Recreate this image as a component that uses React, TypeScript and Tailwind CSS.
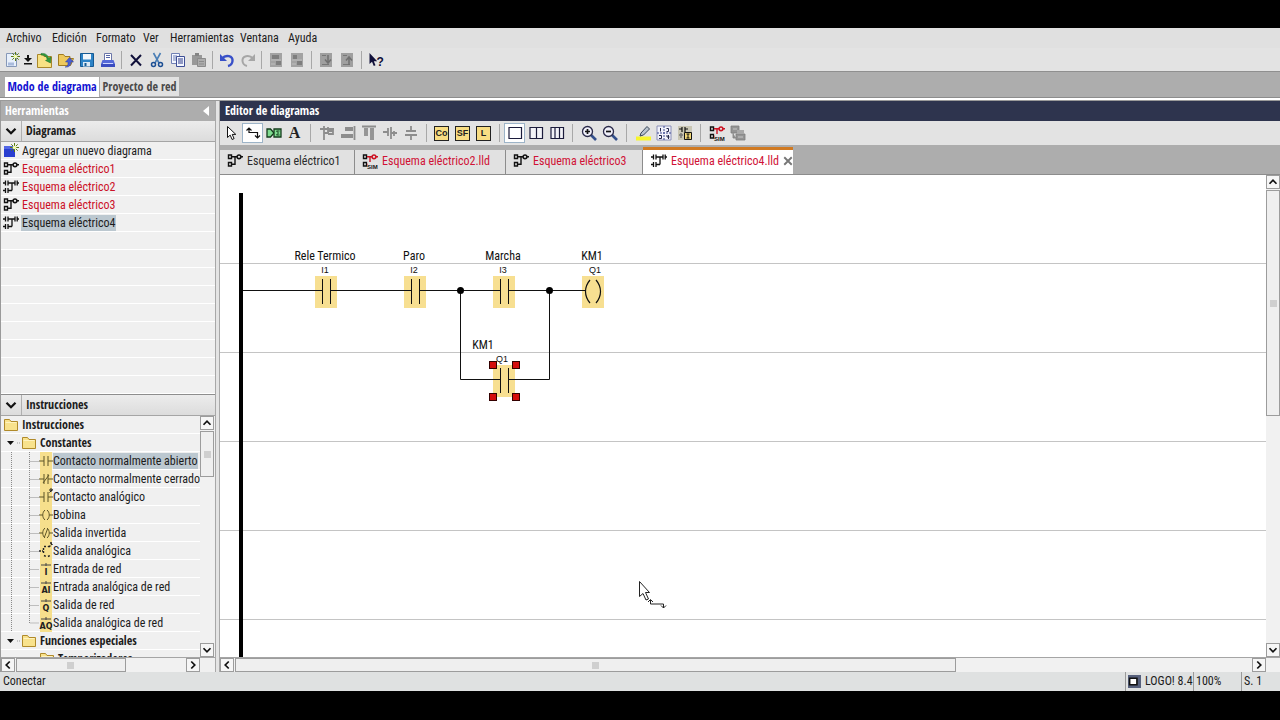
import type { ReactNode } from "react";

const MENUS = [
  { label: "Archivo", width: "w-[46px]" },
  { label: "Edición", width: "w-[44px]" },
  { label: "Formato", width: "w-[47px]" },
  { label: "Ver", width: "w-[27px]" },
  { label: "Herramientas", width: "w-[70px]" },
  { label: "Ventana", width: "w-[48px]" },
  { label: "Ayuda", width: "w-[40px]" },
];

type SchemeKind = "fbd" | "ladder" | "sim";

const DIAGRAMS: { name: string; kind: SchemeKind; selected?: boolean }[] = [
  { name: "Esquema eléctrico1", kind: "fbd" },
  { name: "Esquema eléctrico2", kind: "ladder" },
  { name: "Esquema eléctrico3", kind: "fbd" },
  { name: "Esquema eléctrico4", kind: "ladder", selected: true },
];

const INSTRUCTIONS = [
  "Contacto normalmente abierto",
  "Contacto normalmente cerrado",
  "Contacto analógico",
  "Bobina",
  "Salida invertida",
  "Salida analógica",
  "Entrada de red",
  "Entrada analógica de red",
  "Salida de red",
  "Salida analógica de red",
];

const TABS: { name: string; kind: SchemeKind; width: string; dark?: boolean }[] = [
  { name: "Esquema eléctrico1", kind: "fbd", width: "w-[135px]", dark: true },
  { name: "Esquema eléctrico2.lld", kind: "sim", width: "w-[151px]" },
  { name: "Esquema eléctrico3", kind: "fbd", width: "w-[137px]" },
];

// The bold titles use a family of their own
const BOLD = "font-['Open_Sans_Condensed','Roboto_Condensed',Roboto,sans-serif] font-bold";

function Icon({ children, className = "h-4 w-4" }: { children: ReactNode; className?: string }) {
  return (
    <svg viewBox="0 0 16 16" className={`shrink-0 ${className}`} fill="none" aria-hidden="true">
      {children}
    </svg>
  );
}

function ToolButton({
  label,
  children,
  active = false,
  width = "w-[21px]",
}: {
  label: string;
  children: ReactNode;
  active?: boolean;
  width?: string;
}) {
  return (
    <button
      type="button"
      aria-label={label}
      className={`flex h-5 shrink-0 items-center justify-center ${width} ${
        active ? "border border-[#9db4c8] bg-white" : ""
      }`}
    >
      {children}
    </button>
  );
}

function Separator({ width = "w-[7px]" }: { width?: string }) {
  return (
    <span className={`flex shrink-0 justify-center ${width}`}>
      <span className="h-[18px] w-px bg-[#a8a8a8]" />
    </span>
  );
}

/* ---------- icons ---------- */

function Burst() {
  return (
    <g>
      <path d="M11.500 0v9M7 4.500h9M8.300 1.300l6.400 6.400M14.700 1.300L8.300 7.700" stroke="#5a7a10" />
      <circle cx="11.500" cy="4.500" r="1.800" fill="#f6ffb0" />
    </g>
  );
}

function FolderShape() {
  return (
    <g stroke="#b08a2a">
      <path d="M1.500 2.500h5l1.500 2h6.500v9h-13z" fill="#f8e28c" />
      <path d="M2.500 5.500h11" stroke="#fff3be" />
    </g>
  );
}

function Chevron({ dir, size = "h-[14px] w-[14px]" }: { dir: "up" | "down" | "left" | "right"; size?: string }) {
  const d = {
    up: "M4 10l4-4 4 4",
    down: "M4 6l4 4 4-4",
    left: "M10 4L6 8l4 4",
    right: "M6 4l4 4-4 4",
  }[dir];
  return (
    <Icon className={size}>
      <path d={d} stroke="#111" strokeWidth="2" />
    </Icon>
  );
}

function SchemeIcon({ kind }: { kind: SchemeKind }) {
  if (kind === "ladder") {
    return (
      <Icon>
        <g stroke="#111" strokeWidth="1.300">
          <path d="M0 4h2M5 4h4v7.500M2.500 1.500v5M5 1.500v5M9 4h3M12 1.500v5M14.200 1.500v5M14.200 4H16" />
          <path d="M0 11.500h2M2.500 9v5M5 9v5M5 11.500h4" />
        </g>
      </Icon>
    );
  }
  const accent = kind === "sim" ? "#cc1122" : "#111";
  return (
    <Icon>
      <path d="M1.500 2h3v3.500h-3zM1.500 9.500h3V13h-3z" stroke="#111" strokeWidth="1.400" />
      <path d="M5 3.800h5M8 3.800v7.500H5" stroke={accent} strokeWidth="1.400" />
      <circle cx="12" cy="3.800" r="1.900" stroke={accent} strokeWidth="1.500" />
      <path d="M14 3.800h2" stroke={accent} strokeWidth="1.400" />
      {kind === "sim" && (
        <>
          <path d="M5.500 9H16v7H5.500z" fill="#e3e3e3" />
          <text x="5" y="15.500" fontSize="6" fontWeight="700" fill="#111" className="font-['Liberation_Sans',sans-serif]">
            SIM
          </text>
        </>
      )}
    </Icon>
  );
}

function NewDiagramIcon() {
  return (
    <Icon>
      <path d="M1 3h11v11H1z" fill="#2a3fd0" />
      <path d="M1 3h11v3H1z" fill="#5468e6" />
      <Burst />
    </Icon>
  );
}

function InstructionIcon({ index }: { index: number }) {
  const letters = ["I", "AI", "Q", "AQ"][index - 6];
  return (
    <svg viewBox="0 0 14 18" className="h-[18px] w-[14px] shrink-0" fill="none" aria-hidden="true">
      <path d="M1 0h12v18H1z" fill="#f6df8c" />
      <g stroke="#5d5426">
        {index < 3 && <path d="M0 9h5M9 9h5M5 4v10M9 4v10" />}
        {index === 1 && <path d="M4 13l6-8" />}
        {index === 2 && <path d="M10.500 4.500l3-3M11 1h2v2h-2z" stroke="#222" />}
        {(index === 3 || index === 4) && <path d="M0 9h3.500M10.500 9H14M6 4c-3 2.500-3 7.500 0 10M8 4c3 2.500 3 7.500 0 10" />}
        {index === 4 && <path d="M5.500 13l3-8" />}
        {index === 5 && (
          <path
            d="M0 9h4M4.500 6v6M5 4.500h2M5 13.500l2 1M9 14.500l2-1M10 5l3-3M11 1h2v2M9 5l1-1"
            stroke="#222"
            strokeWidth="1.400"
            strokeDasharray="2 1"
          />
        )}
      </g>
      {letters && (
        <>
          <path d="M2 5h10M7 3v3" stroke="#444" />
          <text
            x="7"
            y="15"
            textAnchor="middle"
            fontSize="8"
            fontWeight="700"
            fill="#222"
            className="font-['DejaVu_Sans',sans-serif]"
          >
            {letters}
          </text>
        </>
      )}
    </svg>
  );
}

function PointerPath() {
  return <path d="M3.500 1.500v11l2.700-2.400 1.900 4.400 2-.9-1.900-4.200h3.600z" fill="#fff" stroke="#111" />;
}

/* ---------- bars ---------- */

function MainToolbar() {
  return (
    <div role="toolbar" className="flex h-6 shrink-0 items-center border-b border-[#8f8f8f] bg-[#e3e3e3] pl-px">
      <ToolButton label="Nuevo">
        <Icon>
          <path d="M2.500 1.500h10v13h-10z" fill="#e8f0fb" stroke="#8698b8" />
          <path d="M4 12h6" stroke="#a9bbdc" strokeWidth="3" />
          <Burst />
        </Icon>
      </ToolButton>
      <ToolButton label="Tipo de archivo nuevo" width="w-[12px]">
        <svg viewBox="0 0 8 12" className="h-3 w-2" aria-hidden="true">
          <path d="M3 1h2v3h3L4 8 0 4h3zM0 9h8v1.500H0z" fill="#111" />
        </svg>
      </ToolButton>
      <ToolButton label="Abrir">
        <Icon>
          <path d="M.500 2.500h5l1.500 2h7.500v11H.500z" fill="#f7e184" stroke="#a9872b" />
          <path d="M4 1.500c4-.5 6.500 1 7.500 4.500l2.500-1-.5 6-5-2.500 1.800-1C9.500 4.500 7.500 3 4 3z" fill="#2f9a3a" stroke="#1d6b2a" strokeWidth=".500" />
        </Icon>
      </ToolButton>
      <ToolButton label="Abrir desde proyecto">
        <Icon>
          <path d="M.500 2.500h5l1.500 2h5v2h3.500l-3 7H.500z" fill="#eec95d" stroke="#a07c22" />
          <path d="M7 15c3-.5 3-2 3-5H7.500l4-4.500 4 4.500H13c0 3.500-2 5.500-6 5z" fill="#4a5fd0" stroke="#2b3b9a" strokeWidth=".500" />
        </Icon>
      </ToolButton>
      <ToolButton label="Guardar">
        <Icon>
          <path d="M1.500 1.500h13v13h-13z" fill="#2d83c6" stroke="#155a94" />
          <path d="M4 2h8v5.500H4z" fill="#f1f7fc" />
          <path d="M4 10h7v4.500H4z" fill="#dce9f4" />
          <path d="M5.500 11h2v3h-2z" fill="#155a94" />
        </Icon>
      </ToolButton>
      <ToolButton label="Imprimir">
        <Icon>
          <path d="M4.500 1.500h7v7h-7z" fill="#fff" stroke="#6b76a8" />
          <path d="M6 3.500h4M6 5.500h4" stroke="#5565a8" />
          <path d="M2.500 8h11l1.500 4H1z" fill="#5468d8" />
          <path d="M1 12h14v3H1z" fill="#3a4cc0" />
          <path d="M3 11.500h10" stroke="#cdd5ff" />
        </Icon>
      </ToolButton>
      <Separator />
      <ToolButton label="Eliminar">
        <Icon>
          <path d="M3 3l10 10.500M13 3L3 13.500" stroke="#10103a" strokeWidth="2" />
        </Icon>
      </ToolButton>
      <ToolButton label="Cortar">
        <Icon>
          <path d="M4.500 1l5.500 10M11.500 1L6 11" stroke="#4a7eb5" strokeWidth="1.600" />
          <circle cx="4.500" cy="12.500" r="2" stroke="#1c4f94" strokeWidth="1.500" />
          <circle cx="11.500" cy="12.500" r="2" stroke="#1c4f94" strokeWidth="1.500" />
        </Icon>
      </ToolButton>
      <ToolButton label="Copiar">
        <Icon>
          <path d="M1.500 1.500h8v10h-8z" fill="#f3f6ff" stroke="#7080b4" />
          <path d="M3 4h4M3 6h3M3 8h3" stroke="#7080b4" />
          <path d="M6.500 4.500h8v10h-8z" fill="#f3f6ff" stroke="#3e4f96" />
          <path d="M8 7h5M8 9h5M8 11h5" stroke="#2c3b88" />
        </Icon>
      </ToolButton>
      <ToolButton label="Pegar">
        <Icon>
          <path d="M1 3h10v10H1z" fill="#999" />
          <path d="M4 1h4v3H4z" fill="#858585" />
          <path d="M6.500 6.500h8v8h-8z" fill="#acacac" stroke="#8b8b8b" />
          <path d="M8 9.500h5M8 12h5" stroke="#8b8b8b" />
        </Icon>
      </ToolButton>
      <Separator />
      <ToolButton label="Deshacer">
        <Icon>
          <path d="M3 6.500C7 2 14 4 13.500 9c-.3 3-2.500 4.500-4.500 5" stroke="#3850c8" strokeWidth="2.400" />
          <path d="M1 2v7h7z" fill="#3850c8" />
        </Icon>
      </ToolButton>
      <ToolButton label="Rehacer">
        <Icon>
          <path d="M13 6.500C9 2 2 4 2.500 9c.3 3 2.500 4.500 4.500 5" stroke="#a6a6a6" strokeWidth="2" />
          <path d="M15 2v7H8z" fill="#a6a6a6" />
        </Icon>
      </ToolButton>
      <Separator />
      {["Arrancar", "Parar"].map((label, i) => (
        <ToolButton key={label} label={label}>
          <Icon>
            <path d="M2 1h12v14H2z" fill="#a3a3a3" />
            <path d={i ? "M4 3h4v4H4zM8 9h5v4H8z" : "M4 3h7v4H4zM8 9h5v4H8z"} fill="#7e7e7e" />
            <path d="M3 8h10M3 12h4" stroke="#bdbdbd" />
          </Icon>
        </ToolButton>
      ))}
      <Separator width="w-[8px]" />
      {["PC a LOGO!", "LOGO! a PC"].map((label, i) => (
        <ToolButton key={label} label={label}>
          <Icon>
            <path d="M2 1h12v14H2z" fill="#9f9f9f" />
            <path d="M4 3.500h4M4 12.500h7" stroke="#777" />
            <path d={i ? "M10 13V6M7 8.500L10 5l3 3.500" : "M10 3v7M7 7.500l3 3.500 3-3.500"} stroke="#707070" strokeWidth="1.500" />
          </Icon>
        </ToolButton>
      ))}
      <Separator width="w-[8px]" />
      <ToolButton label="Ayuda contextual">
        <Icon>
          <path d="M1.500 1v11l2.500-2.200L5.800 14l1.700-.8-1.700-4h3.400z" fill="#10103a" />
          <text x="8.500" y="14" fontSize="12" fontWeight="700" fill="#10103a" className="font-['Liberation_Sans',sans-serif]">
            ?
          </text>
        </Icon>
      </ToolButton>
    </div>
  );
}

const ALIGN_ICONS = [
  { label: "Alinear automáticamente", d: "M1 4h14M5 1v14M9 2v5M5 8h5M9 6h5v3H9" },
  { label: "Alinear a la derecha", d: "M14.500 1v14M5 3h8M5 5h8M1 10h12M1 12h12" },
  { label: "Alinear arriba", d: "M1 1.500h14M4 3v8M6 3v8M10 3v12M12 3v12" },
  { label: "Distribuir horizontalmente", d: "M1 7h5M6 3v8M9 2v12M9 8h6M12 6v5" },
  { label: "Distribuir verticalmente", d: "M8 1v5M3 6h10M2 10h12M8 10v5" },
];

function EditorToolbar() {
  return (
    <div role="toolbar" className="flex h-6 shrink-0 items-center overflow-hidden bg-[#e3e3e3] pl-px">
      <ToolButton label="Seleccionar">
        <Icon>
          <PointerPath />
        </Icon>
      </ToolButton>
      <ToolButton label="Conectar" active>
        <Icon>
          <path d="M4 8V3M1.500 5.500L4 3l2.500 2.500M4 7.500h8.500v5M10 10.500l2.500 2.500 2.500-2.500" stroke="#111" strokeWidth="1.200" />
        </Icon>
      </ToolButton>
      <ToolButton label="Bloques">
        <Icon>
          <path d="M1 4h3.500L8 8l-3.500 4H1z" fill="#7fdc90" stroke="#143c1c" strokeWidth="1.300" />
          <path d="M8 4h7v8H8z" fill="#7fdc90" stroke="#143c1c" strokeWidth="1.300" />
          <path d="M13.500 6h-3l2 2-2 2h3" stroke="#143c1c" />
        </Icon>
      </ToolButton>
      <ToolButton label="Texto">
        <span className="font-['Liberation_Serif',serif] text-[16px] font-bold leading-none text-[#222]">A</span>
      </ToolButton>
      <Separator width="w-[11px]" />
      {ALIGN_ICONS.map(({ label, d }) => (
        <ToolButton key={label} label={label}>
          <Icon>
            <path d={d} stroke="#8d8d8d" strokeWidth="1.800" />
          </Icon>
        </ToolButton>
      ))}
      <Separator width="w-[10px]" />
      {["Co", "SF", "L"].map((code) => (
        <ToolButton key={code} label={code}>
          <span className="flex h-[15px] w-[15px] items-center justify-center border border-[#222] bg-[#f8dd83] font-['Liberation_Sans',sans-serif] text-[9px] font-bold leading-none text-[#222]">
            {code}
          </span>
        </ToolButton>
      ))}
      <Separator width="w-[10px]" />
      {["M8 8", "M8.500 2.500v11", "M6 2.500v11M10.500 2.500v11"].map((d, i) => (
        <ToolButton key={d} label={`Dividir ${i + 1}`} active={i === 0}>
          <Icon>
            <path d="M2 2.500h12.500v11H2z" fill={i ? "#f3f3f7" : "#fff"} stroke="#1c1c3c" strokeWidth="1.200" />
            <path d={d} stroke="#1c1c3c" strokeWidth="1.200" />
          </Icon>
        </ToolButton>
      ))}
      <Separator width="w-[11px]" />
      {["Acercar", "Alejar"].map((label, i) => (
        <ToolButton key={label} label={label}>
          <Icon>
            <path d="M10 10l5 5" stroke="#34508c" strokeWidth="2.600" />
            <circle cx="6.500" cy="6.500" r="5" fill="#f0f0fa" stroke="#2a2a4a" strokeWidth="1.300" />
            <path d={i ? "M4 6.500h5" : "M4 6.500h5M6.500 4v5"} stroke="#111" strokeWidth="1.700" />
          </Icon>
        </ToolButton>
      ))}
      <Separator width="w-[12px]" />
      <ToolButton label="Resaltar">
        <Icon>
          <path d="M1 11.500h15v4H1z" fill="#f7f52c" />
          <path d="M5 11l1-3 6-6.500L14.500 4l-6 6z" fill="#b9c3cf" stroke="#39465a" />
        </Icon>
      </ToolButton>
      <ToolButton label="Numeración">
        <Icon>
          <path d="M1 1h14v14H1z" fill="#f1f2fb" stroke="#8a8fb8" />
          <path d="M1 8h14M8 1v14" stroke="#3b4690" strokeDasharray="2 1" />
          <path d="M4.500 3v3.500M10.500 3.500h2v3h-2M3 10.500h2.500v3H3M11 10v2h2.500M12.500 10v4" stroke="#22264c" />
        </Icon>
      </ToolButton>
      <ToolButton label="Convertir">
        <Icon>
          <path d="M1 1h14v14H1z" fill="#c9c6b4" />
          <path d="M2 4h3M5 2v5M8 2v5M8 4h3" stroke="#111" strokeWidth="1.200" />
          <path d="M7.500 7.500h7v7h-7z" fill="#f3d979" stroke="#111" />
          <path d="M11 9v4M9.500 9h3M9.500 13h3" stroke="#111" />
          <path d="M2 10h4M4 8v5" stroke="#777" strokeWidth="1.500" />
        </Icon>
      </ToolButton>
      <Separator width="w-[11px]" />
      <ToolButton label="Simulación">
        <SchemeIcon kind="sim" />
      </ToolButton>
      <ToolButton label="Test online">
        <Icon>
          <path d="M1 1h8v7H1zM6 9h9v6H6zM3 8v5h3" fill="#949494" stroke="#7f7f7f" strokeWidth=".800" />
          <path d="M7 5h7v4H7z" fill="#a8a8a8" />
          <path d="M3 4h4M8 12h5" stroke="#c6c6c6" />
        </Icon>
      </ToolButton>
    </div>
  );
}

function ScrollBar({
  vertical = false,
  thumb,
  label,
}: {
  vertical?: boolean;
  thumb: string;
  label: string;
}) {
  const arrow = "flex h-[14px] w-[14px] shrink-0 items-center justify-center border border-[#9c9c9c] bg-[#f6f6f6]";
  return (
    <div
      aria-label={label}
      className={`flex shrink-0 justify-between gap-px bg-[#f1f1f1] ${vertical ? "w-[14px] flex-col" : "h-[14px] min-w-0 flex-1"}`}
    >
      <button type="button" aria-label="Retroceder" className={arrow}>
        <Chevron dir={vertical ? "up" : "left"} />
      </button>
      <div className={`flex min-h-0 min-w-0 flex-1 ${vertical ? "flex-col" : ""}`}>
        <div className={`flex items-center justify-center border border-[#9c9c9c] bg-[#efefef] ${thumb}`}>
          <span className="h-[7px] w-[7px] bg-[#cfcfcf]" />
        </div>
      </div>
      <button type="button" aria-label="Avanzar" className={arrow}>
        <Chevron dir={vertical ? "down" : "right"} />
      </button>
    </div>
  );
}

/* ---------- left side ---------- */

function SectionHeader({ title }: { title: string }) {
  return (
    <h2 className={`flex h-[21px] shrink-0 items-center border-b border-[#a5a5a5] bg-linear-to-b from-[#ececec] to-[#dcdcdc] text-[12px] ${BOLD}`}>
      <button type="button" aria-label={`Contraer ${title}`} className="flex h-full w-[21px] items-center justify-center border-r border-[#b0b0b0]">
        <Chevron dir="down" size="h-[18px] w-[18px]" />
      </button>
      <span className="pl-1">{title}</span>
    </h2>
  );
}

function FolderRow({ name }: { name: string }) {
  return (
    <li className={`flex h-[18px] items-center border-b border-white text-[12px] ${BOLD}`}>
      <svg viewBox="0 0 20 8" className="h-2 w-5 shrink-0" aria-hidden="true">
        <path d="M6 2h7L9.500 6z" fill="#111" />
        <path d="M16 4h4" stroke="#999" strokeDasharray="1 1" />
      </svg>
      <Icon>
        <FolderShape />
      </Icon>
      <span className="pl-[3px]">{name}</span>
    </li>
  );
}

function Sidebar() {
  return (
    <aside className="flex w-[215px] shrink-0 flex-col border-l border-[#9a9a9a] bg-[#f0f0f0]">
      <div className="flex h-5 shrink-0 items-center justify-between bg-[#adadad] pl-1 pr-[6px] text-[12px] text-white">
        <span className={BOLD}>Herramientas</span>
        <button type="button" aria-label="Ocultar herramientas">
          <svg viewBox="0 0 6 10" className="h-[10px] w-[6px]" aria-hidden="true">
            <path d="M6 0v10L0 5z" fill="#fff" />
          </svg>
        </button>
      </div>

      <SectionHeader title="Diagramas" />
      <ul className="flex h-[252px] shrink-0 flex-col overflow-hidden">
        <li className="flex h-[18px] shrink-0 items-center border-b border-white pl-[2px] text-[12px]">
          <NewDiagramIcon />
          <span className="pl-[3px]">Agregar un nuevo diagrama</span>
        </li>
        {DIAGRAMS.map((d) => (
          <li key={d.name} className="flex h-[18px] shrink-0 items-center border-b border-white pl-[2px] text-[12px]">
            <SchemeIcon kind={d.kind} />
            <span className={`ml-[2px] px-px ${d.selected ? "bg-[#bcc8d0] text-[#1c1c1c]" : "text-[#cc1128]"}`}>{d.name}</span>
          </li>
        ))}
        {Array.from({ length: 9 }).map((_, i) => (
          <li key={i} className="h-[18px] shrink-0 border-b border-white" />
        ))}
      </ul>

      <div className="shrink-0 border-t border-[#8d8d8d]">
        <SectionHeader title="Instrucciones" />
      </div>
      <div className="flex min-h-0 flex-1 pr-px">
        <ul className="min-w-0 flex-1 overflow-hidden">
          <li className={`flex h-[18px] items-center border-b border-white pl-[2px] text-[12px] ${BOLD}`}>
            <Icon>
              <FolderShape />
            </Icon>
            <span className="pl-[3px]">Instrucciones</span>
          </li>
          <FolderRow name="Constantes" />
          {INSTRUCTIONS.map((name, i) => (
            <li key={name} className="flex h-[18px] items-center border-b border-white text-[12px]">
              <svg viewBox="0 0 38 18" className="h-[18px] w-[38px] shrink-0" aria-hidden="true">
                <path
                  d={i === INSTRUCTIONS.length - 1 ? "M10.500 0v18M28.500 0v9h10" : "M10.500 0v18M28.500 0v18M28.500 9.500h10"}
                  fill="none"
                  stroke="#8a8a8a"
                  strokeDasharray="1 1"
                />
              </svg>
              <InstructionIcon index={i} />
              <span className={`whitespace-nowrap ${i === 0 ? "bg-[#bcc8d0]" : ""}`}>{name}</span>
            </li>
          ))}
          <FolderRow name="Funciones especiales" />
          <li className={`flex h-[18px] items-center pl-[38px] text-[12px] ${BOLD}`}>
            <Icon>
              <FolderShape />
            </Icon>
            <span className="pl-[3px]">Temporizadores</span>
          </li>
        </ul>
        <ScrollBar vertical thumb="h-[22%]" label="Desplazamiento vertical de instrucciones" />
      </div>
      <div className="flex shrink-0 border-t border-[#a5a5a5] pr-[15px]">
        <ScrollBar thumb="w-[65%]" label="Desplazamiento horizontal de instrucciones" />
      </div>
    </aside>
  );
}

/* ---------- diagram ---------- */

const CONTACTS = [
  { name: "Rele Termico", pin: "I1", x: 95, y: 101 },
  { name: "Paro", pin: "I2", x: 184, y: 101 },
  { name: "Marcha", pin: "I3", x: 273, y: 101 },
];

function Contact({ x, y }: { x: number; y: number }) {
  return (
    <g>
      <rect x={x} y={y} width="22" height="32" fill="#f7df91" />
      <path d={`M${x + 7.5} ${y + 3}v25M${x + 15.5} ${y + 3}v25`} stroke="#111" strokeWidth="1" />
    </g>
  );
}

function Diagram() {
  return (
    <svg className="block h-full w-full font-['Liberation_Sans',sans-serif]" role="img" aria-label="Esquema eléctrico4">
      {[88, 177, 266, 355, 444].map((y) => (
        <rect key={y} x="0" y={y} width="100%" height="1" fill="#c4c4c4" />
      ))}
      <rect x="19" y="18" width="4" height="100%" fill="#000" />

      {CONTACTS.map((c) => (
        <Contact key={c.pin} x={c.x} y={c.y} />
      ))}
      <rect x="362" y="101" width="22" height="32" fill="#f7df91" />
      <Contact x={273} y={190} />

      <g stroke="#111" fill="none">
        <path d="M23 115.500h79M110 115.500h81M199 115.500h81M288 115.500h78" />
        <path d="M240.500 115v89.500H280M288 204.500h41.500V115" />
        <path d="M370 105c-6 7-6 16 0 23M376 105c6 7 6 16 0 23" strokeWidth="1.200" />
      </g>
      <circle cx="240.500" cy="115.500" r="3.500" fill="#000" />
      <circle cx="329.500" cy="115.500" r="3.500" fill="#000" />

      <g fill="#111" fontSize="9" textAnchor="middle">
        {CONTACTS.map((c) => (
          <text key={c.pin} x={c.x + 10} y="98">
            {c.pin}
          </text>
        ))}
        <text x="375" y="98">
          Q1
        </text>
        <text x="282" y="187">
          Q1
        </text>
      </g>
      <g fill="#111" fontSize="12" textAnchor="middle" className="font-['Roboto_Condensed',Roboto,sans-serif]">
        {CONTACTS.map((c) => (
          <text key={c.name} x={c.x + 10} y="85">
            {c.name}
          </text>
        ))}
        <text x="372" y="85">
          KM1
        </text>
        <text x="263" y="174">
          KM1
        </text>
      </g>

      {[
        [269, 187],
        [292, 187],
        [269, 219],
        [292, 219],
      ].map(([x, y]) => (
        <rect key={`${x}-${y}`} x={x + 0.5} y={y - 0.5} width="7" height="7" fill="#d40d0d" stroke="#300" />
      ))}

      <g stroke="#222" fill="none">
        <path d="M419.500 406.500v15l3.500-3 3 6.500 2.500-1-3-6.500h4z" fill="#fff" />
        <path d="M428 427l2.500-2.500L433 427M430.500 425v4h13v4M441 430.500l2.500 2.500 2.500-2.500" />
      </g>
    </svg>
  );
}

function EditorTabs() {
  return (
    <div role="tablist" className="flex h-[30px] shrink-0 items-end border-b border-[#8c8c8c] bg-[#adadad]">
      {TABS.map((t) => (
        <button
          key={t.name}
          type="button"
          role="tab"
          aria-selected="false"
          className={`flex h-6 shrink-0 items-center gap-1 whitespace-nowrap border-r border-[#8c8c8c] bg-[#e1e1e1] pb-[2px] pl-[7px] text-[12px] ${t.width} ${
            t.dark ? "text-[#2b2b2b]" : "text-[#d01236]"
          }`}
        >
          <SchemeIcon kind={t.kind} />
          {t.name}
        </button>
      ))}
      <div
        role="tab"
        aria-selected="true"
        className="flex h-[27px] w-[150px] shrink-0 items-center gap-1 whitespace-nowrap border-t-[3px] border-[#d17a22] bg-white pb-[2px] pl-2 text-[12px] text-[#d01236]"
      >
        <SchemeIcon kind="ladder" />
        <span className="flex-1">Esquema eléctrico4.lld</span>
        <button type="button" aria-label="Cerrar" className="pr-1">
          <Icon className="h-[10px] w-[10px]">
            <path d="M2 2l12 12M14 2L2 14" stroke="#777" strokeWidth="3" />
          </Icon>
        </button>
      </div>
    </div>
  );
}

function StatusBar() {
  return (
    <footer className="flex h-[19px] shrink-0 items-center bg-[#dfe1e1] text-[12px]">
      <span className="flex-1 pb-px pl-[3px]">Conectar</span>
      <span className="flex h-full w-[68px] items-center gap-1 overflow-hidden whitespace-nowrap border-l border-[#9a9a9a] pb-px pl-[2px]">
        <Icon className="h-[13px] w-[13px]">
          <path d="M0 0h16v16H0z" fill="#56607c" />
          <path d="M2 4h9v8H2z" fill="#fff" stroke="#111" strokeWidth="2" />
        </Icon>
        LOGO! 8.4
      </span>
      <span className="flex h-full w-12 items-center border-l border-[#9a9a9a] pb-px pl-[2px]">100%</span>
      <span className="flex h-full w-[39px] items-center border-l border-[#9a9a9a] pb-px pl-[2px]">S. 1</span>
    </footer>
  );
}

export default function App() {
  return (
    <div className="flex h-screen flex-col overflow-hidden bg-black pb-[29px] pt-[28px] font-['Roboto_Condensed',Roboto,sans-serif] leading-[16px] text-[#1c1c1c]">
      <nav className="flex h-5 shrink-0 items-center bg-[#e0e0e0] pl-[6px] text-[12px]">
        {MENUS.map((m) => (
          <button key={m.label} type="button" className={`shrink-0 whitespace-nowrap text-left ${m.width}`}>
            {m.label}
          </button>
        ))}
      </nav>
      <MainToolbar />
      <div role="tablist" className={`flex h-[25px] shrink-0 items-end bg-[#adadad] pl-[5px] text-[12px] ${BOLD}`}>
        <button type="button" role="tab" aria-selected="true" className="h-5 w-[94px] whitespace-nowrap bg-white text-[#1414d2]">
          Modo de diagrama
        </button>
        <button type="button" role="tab" aria-selected="false" className="mb-px ml-px h-[19px] w-[79px] whitespace-nowrap bg-[#e1e1e1] text-[#4a4a4a]">
          Proyecto de red
        </button>
      </div>
      <div className="h-1 shrink-0 border-b border-t border-b-[#9a9a9a] border-t-[#8c8c8c] bg-white" />

      <div className="flex min-h-0 flex-1">
        <Sidebar />
        <div className="w-[5px] shrink-0 border-x border-[#a8a8a8] bg-[#e4e4e4]" />
        <main className="flex min-w-0 flex-1 flex-col bg-white">
          <h1 className={`h-5 shrink-0 bg-[#2e344e] pl-[5px] text-[12px] leading-[20px] text-white ${BOLD}`}>Editor de diagramas</h1>
          <EditorToolbar />
          <EditorTabs />
          <div className="flex min-h-0 flex-1">
            <div className="min-w-0 flex-1">
              <Diagram />
            </div>
            <ScrollBar vertical thumb="h-1/2" label="Desplazamiento vertical" />
          </div>
          <div className="flex shrink-0 border-t border-[#a5a5a5] bg-[#f1f1f1] pr-[14px]">
            <ScrollBar thumb="w-[71%]" label="Desplazamiento horizontal" />
          </div>
        </main>
      </div>
      <StatusBar />
    </div>
  );
}
